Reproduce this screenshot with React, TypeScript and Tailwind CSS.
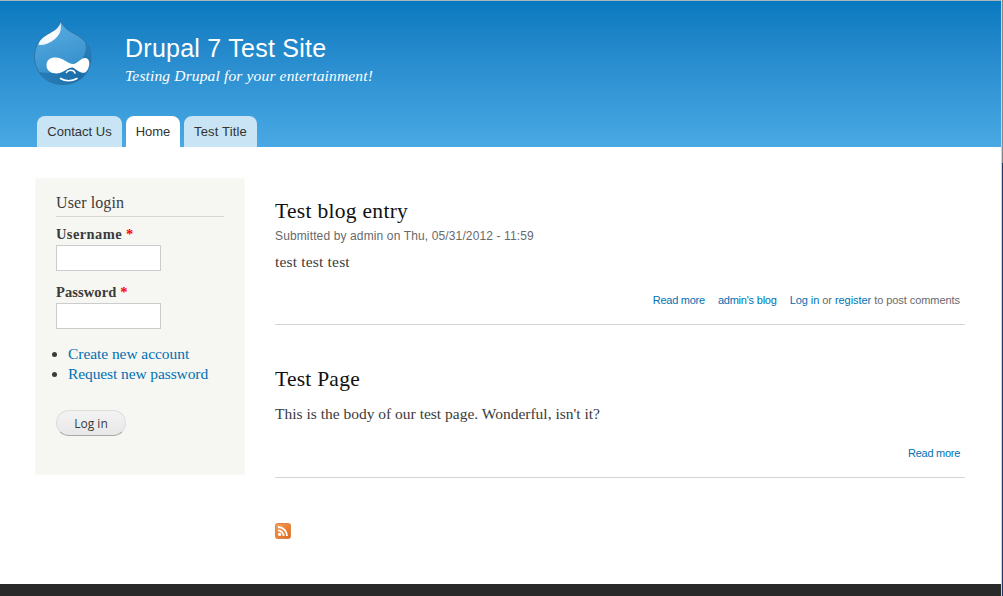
import type { ReactNode } from "react";

const serif = "font-['Liberation_Serif',serif]";

const dropOutline =
  "M26.500 -0.500C28.500 5 33 9 39 12C50 17.500 57 25 57 36C57 52.500 45 63.500 29 63.500C12 63.500 0.500 51.500 0.500 35.500C0.500 24 7 16 16 12C22 9 26 6 26.500 -0.500Z";

function Droplet() {
  return (
    <svg className="block h-[66px] w-[60px] overflow-visible" viewBox="0 0 60 66">
      <defs>
        <linearGradient id="body" x1="0" y1="0" x2="0.3" y2="1">
          <stop offset="0" stopColor="#5cafe0" />
          <stop offset="0.5" stopColor="#469dd6" />
          <stop offset="1" stopColor="#2f8ac8" />
        </linearGradient>
        <linearGradient id="shade" x1="1" y1="0" x2="0" y2="1">
          <stop offset="0" stopColor="#2480bf" />
          <stop offset="0.5" stopColor="#1668a3" />
          <stop offset="1" stopColor="#2c82bd" />
        </linearGradient>
        <linearGradient id="shine" x1="0.8" y1="0" x2="0.2" y2="1">
          <stop offset="0" stopColor="#fff" stopOpacity="0.75" />
          <stop offset="0.4" stopColor="#fff" />
          <stop offset="1" stopColor="#fff" stopOpacity="0.9" />
        </linearGradient>
        <clipPath id="drop">
          <path d={dropOutline} />
        </clipPath>
      </defs>
      <g clipPath="url(#drop)">
        <rect y="-1" width="60" height="67" fill="url(#body)" />
        <path d="M51 20C54 34 47 43 36 47C24 52 10 53 2 50L5 66H60V22Z" fill="url(#shade)" opacity="0.85" />
      </g>
      <path d={dropOutline} fill="none" stroke="#2c719f" strokeWidth="1" opacity="0.8" />
      <path d="M26.500 1.500C24.500 8 19 10.500 13 14C8 17 5 20 4.500 24C10 24.500 16 22 21 18C26 13.500 28 9 26.500 1.500Z" fill="url(#shine)" />
      <path d="M12.500 44.500C12.500 39 16 36.500 21.500 36.500C29 36.500 34 43 39 43C44 43 46 37 51 37C56 37 56.500 44 53.500 49C50 55 44 50 39 46.500C34 45.500 31 51.500 23 52.500C16.500 52.500 12.500 49 12.500 44.500Z" fill="#fff" />
      <path d="M32.500 51.500C34 48.500 39.500 48.500 41 52M26.500 57.500C31 60.500 38 60.500 43 57.500" fill="none" stroke="#fff" strokeWidth="1.6" strokeLinecap="round" />
    </svg>
  );
}

function FeedIcon() {
  return (
    <svg className="block h-4 w-4" viewBox="0 0 16 16">
      <defs>
        <linearGradient id="feed" x1="0" y1="0" x2="1" y2="1">
          <stop offset="0" stopColor="#f4a261" />
          <stop offset="0.5" stopColor="#ee8136" />
          <stop offset="1" stopColor="#dd6420" />
        </linearGradient>
      </defs>
      <rect x="0.5" y="0.5" width="15" height="15" rx="2" fill="url(#feed)" stroke="#e08246" />
      <circle cx="4.600" cy="11.400" r="1.6" fill="#fff" />
      <path d="M3 7.400A5.600 5.600 0 0 1 8.600 13M3 4A9 9 0 0 1 12 13" fill="none" stroke="#fff" strokeWidth="1.8" />
    </svg>
  );
}

function Tab({ children, className }: { children: ReactNode; className: string }) {
  return (
    <a className={`flex h-[31px] items-center justify-center rounded-t-[8px] text-[13px] text-[#333] ${className}`}>
      {children}
    </a>
  );
}

function Field({ label, type, spacing }: { label: string; type: string; spacing: string }) {
  return (
    <label className="block h-[58px] whitespace-nowrap">
      <span className={`block h-5 text-[14.5px] leading-[19px] font-bold ${spacing}`}>
        {label} <span className="text-[#f00]">*</span>
      </span>
      <input type={type} className="block h-[26px] w-[105px] border border-[#ccc] bg-white" />
    </label>
  );
}

const link = "text-[#0071b3]";

export default function App() {
  return (
    <div className="flex h-[596px] w-[1003px] overflow-hidden bg-white font-['Liberation_Sans',sans-serif] text-[#3b3b3b]">
      <div className="flex w-[1001px] flex-col">
        <header className="flex h-[147px] flex-col border-t border-[#a9b6bd] bg-linear-to-b from-[#0779bf] to-[#48a9e4]">
          <div className="flex h-[115px] pt-5 pl-[34px]">
            <Droplet />
            <div className="pt-[12px] pl-[31px] whitespace-nowrap text-white">
              <h1 className="h-[33px] text-[25px] leading-[30px] tracking-[0.25px]">Drupal 7 Test Site</h1>
              <p className={`h-5 text-[15.5px] leading-5 tracking-[0.15px] italic ${serif}`}>
                Testing Drupal for your entertainment!
              </p>
            </div>
          </div>
          <nav className="flex gap-1 pl-[37px]">
            <Tab className="w-[85px] bg-[#c8e4f5]">Contact Us</Tab>
            <Tab className="w-[54px] bg-white">Home</Tab>
            <Tab className="w-[73px] bg-[#c8e4f5] tracking-[0.15px]">Test Title</Tab>
          </nav>
        </header>
        <div className="flex h-[437px] pt-[31px] pl-[35px]">
          <aside className={`h-[297px] w-[210px] border border-[#f9f9f5] bg-[#f6f6f2] px-5 pt-[13px] ${serif}`}>
            <h2 className="mb-2 h-[25px] border-b border-[#d6d6d6] text-[16px] leading-[22px] tracking-[0.1px]">User login</h2>
            <Field label="Username" type="text" spacing="tracking-[0.4px]" />
            <Field label="Password" type="password" spacing="tracking-[0.1px]" />
            <ul className={`-ml-1 pt-[3px] text-[15.5px] leading-5 whitespace-nowrap ${link}`}>
              <li className="flex h-5 items-center gap-[11px] tracking-[-0.06px]">
                <span className="h-[5px] w-[5px] rounded-full bg-[#3b3b3b]" />Create new account
              </li>
              <li className="flex h-5 items-center gap-[11px] tracking-[-0.1px]">
                <span className="h-[5px] w-[5px] rounded-full bg-[#3b3b3b]" />Request new password
              </li>
            </ul>
            <button className="mt-[26px] block h-[26px] w-[70px] rounded-full border border-[#ddd] border-b-[#aaa] bg-linear-to-b from-[#f3f3f3] to-[#e7e7e7] pt-px font-['Open_Sans',sans-serif] text-[12px] leading-6 text-[#3a3a3a]">
              Log in
            </button>
          </aside>
          <main className="w-[720px] pl-[30px]">
            <article className="h-[147px] border-b border-[#d3d3d3] pt-[21px]">
              <h2 className={`h-6 text-[21.5px] leading-6 tracking-[0.3px] text-[#111] ${serif}`}>Test blog entry</h2>
              <p className="h-[26px] text-[12px] leading-[26px] tracking-[0.13px] text-[#68696b]">
                Submitted by admin on Thu, 05/31/2012 - 11:59
              </p>
              <p className={`h-[25px] text-[15.5px] leading-[25px] tracking-[0.18px] ${serif}`}>test test test</p>
              <div className="flex h-[52px] items-center justify-end gap-[13px] pr-[5px] text-[11px] text-[#68696b]">
                <a className={`tracking-[-0.26px] ${link}`}>Read more</a>
                <a className={`tracking-[-0.22px] ${link}`}>admin's blog</a>
                <span className="tracking-[-0.06px]"><a className={link}>Log in</a> or <a className={link}>register</a> to post comments</span>
              </div>
            </article>
            <article className="h-[153px] border-b border-[#d3d3d3] pt-[42px]">
              <h2 className={`h-6 text-[21.5px] leading-6 tracking-[0.25px] text-[#111] ${serif}`}>Test Page</h2>
              <p className={`mt-[10px] h-[26px] text-[15.5px] leading-[26px] ${serif}`}>
                This is the body of our test page. Wonderful, isn't it?
              </p>
              <div className={`flex h-[52px] items-center justify-end pr-[5px] text-[11px] tracking-[-0.28px] ${link}`}>Read more</div>
            </article>
            <div className="pt-[45px]"><FeedIcon /></div>
          </main>
        </div>
        <footer className="h-3 bg-[#292929]" />
      </div>
      <div className="w-px bg-[#d4d4d0]" />
      <div className="w-px bg-[#1f3864]"><div className="h-[163px] bg-[#85858c]" /></div>
    </div>
  );
}
